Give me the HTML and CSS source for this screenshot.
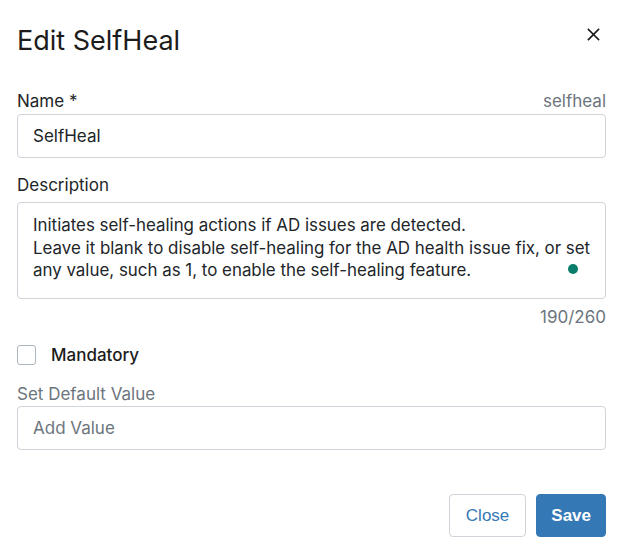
FILE: index.html
```html
<!DOCTYPE html>
<html>
<head>
<meta charset="utf-8">
<link rel="stylesheet" href="styles.css">
</head>
<body>
<div class="dialog">
  <div class="header">
    <h1 class="title">Edit SelfHeal</h1>
    <button class="close-x" aria-label="Close">
      <svg width="13" height="13" viewBox="0 0 13 13"><path d="M1.5 1.5L11.5 11.5M11.5 1.5L1.5 11.5" stroke="#1a1a1a" stroke-width="1.7" stroke-linecap="square"/></svg>
    </button>
  </div>

  <div class="field">
    <div class="label-row lr-name">
      <span class="label">Name *</span>
      <span class="hint">selfheal</span>
    </div>
    <div class="input">SelfHeal</div>
  </div>

  <div class="field">
    <div class="label-row lr-desc">
      <span class="label">Description</span>
    </div>
    <div class="textarea">
      <p>Initiates self-healing actions if AD issues are detected.</p>
      <p>Leave it blank to disable self-healing for the AD health issue fix, or set any value, such as 1, to enable the self-healing feature.</p>
      <span class="dot"></span>
    </div>
    <div class="counter">190/260</div>
  </div>

  <label class="check-row">
    <span class="checkbox"></span>
    <span class="check-label">Mandatory</span>
  </label>

  <div class="field">
    <div class="label-row lr-default">
      <span class="label muted">Set Default Value</span>
    </div>
    <div class="input placeholder">Add Value</div>
  </div>

  <div class="footer">
    <button class="btn btn-outline">Close</button>
    <button class="btn btn-primary">Save</button>
  </div>
</div>
</body>
</html>
```
FILE: styles.css
```css
* { box-sizing: border-box; }
html, body { margin: 0; padding: 0; background: #fff; }
body {
  font-family: Inter, "Noto Sans", sans-serif;
  color: #212529;
  font-size: 17px;
}
.dialog {
  width: 626px;
  padding: 23px 20px 0 17px;
}
.header {
  display: flex;
  justify-content: space-between;
  align-items: flex-start;
  height: 67px;
}
.title {
  margin: 0;
  font-size: 27px;
  font-weight: 400;
  line-height: 36px;
  color: #1c1c1c;
}
.close-x {
  border: 0;
  background: none;
  padding: 0;
  margin: 5px 6px 0 0;
  width: 13px;
  height: 13px;
  display: flex;
}
.field { display: flex; flex-direction: column; }
.label-row {
  display: flex;
  justify-content: space-between;
  align-items: baseline;
  line-height: 22px;
}
.lr-name { margin-bottom: 2px; }
.lr-desc { margin-bottom: 6px; }
.lr-default { margin-bottom: 1px; }
.label { color: #212529; }
.label.muted { color: #6c757d; }
.hint { color: #6c757d; font-size: 17px; }
.input {
  height: 44px;
  border: 1px solid #ced4da;
  border-radius: 4px;
  padding: 0 15px;
  display: flex;
  align-items: center;
  margin-bottom: 16px;
}
.input.placeholder { color: #6c757d; margin-bottom: 0; }
.textarea {
  position: relative;
  height: 97px;
  border: 1px solid #ced4da;
  border-radius: 4px;
  padding: 11px 8px 11px 15px;
  font-size: 16.9px;
  line-height: 22.5px;
}
.textarea p { margin: 0; }
.dot {
  position: absolute;
  right: 27px;
  top: 61px;
  width: 10px;
  height: 10px;
  border-radius: 50%;
  background: #0a7e6b;
}
.counter {
  text-align: right;
  color: #6c757d;
  line-height: 22px;
  margin-top: 7px;
}
.check-row {
  display: flex;
  align-items: center;
  gap: 15px;
  margin-top: 16px;
  margin-bottom: 17px;
  height: 22px;
}
.checkbox {
  width: 19px;
  height: 20px;
  border: 1px solid #adb5bd;
  border-radius: 3px;
}
.check-label { font-weight: 500; line-height: 22px; color: #1c1c1c; }
.footer {
  display: flex;
  justify-content: flex-end;
  gap: 10px;
  margin-top: 44px;
}
.btn {
  font-family: "Liberation Sans", Arial, sans-serif;
  font-size: 17px;
  height: 43px;
  border-radius: 4px;
}
.btn-outline {
  background: #fff;
  border: 1px solid #ced4da;
  color: #3578b6;
  padding: 0 16px;
}
.btn-primary {
  background: #3578b6;
  border: 1px solid #3578b6;
  color: #fff;
  font-weight: 700;
  padding: 0 14px;
}
```
